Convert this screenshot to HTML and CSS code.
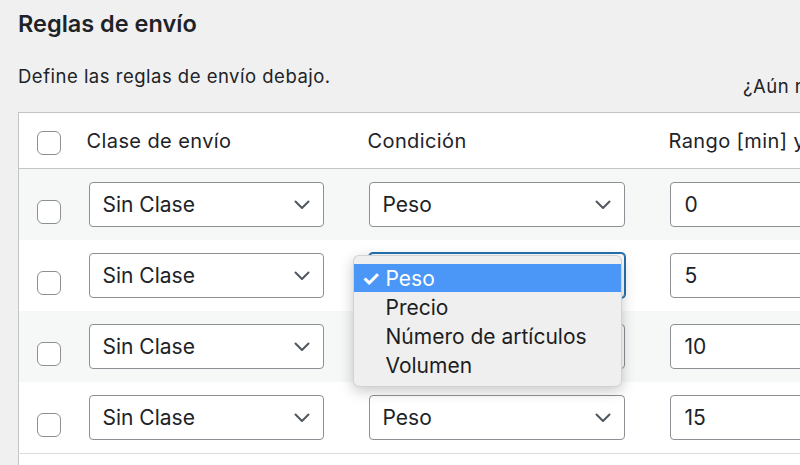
FILE: index.html
```html
<!DOCTYPE html>
<html lang="es">
<head>
<meta charset="utf-8">
<title>Reglas de envío</title>
<link rel="stylesheet" href="styles.css">
</head>
<body>
<div class="wrap">
  <h2 class="title">Reglas de envío</h2>
  <div class="intro">
    <p class="desc">Define las reglas de envío debajo.</p>
    <p class="note">¿Aún no tienes clases de envío? Créalas aquí.</p>
  </div>

  <table class="rules">
    <thead>
      <tr>
        <th class="col-check"><span class="checkbox head"></span></th>
        <th class="col-class">Clase de envío</th>
        <th class="col-cond">Condición</th>
        <th class="col-range">Rango [min] y [max]</th>
      </tr>
    </thead>
    <tbody>
      <tr class="alt">
        <td class="col-check"><span class="checkbox"></span></td>
        <td><div class="select sel-class"><span>Sin Clase</span><svg class="chev" viewBox="0 0 16 10"><path d="M1.5 1.5 L8 8 L14.5 1.5"/></svg></div></td>
        <td><div class="select sel-cond"><span>Peso</span><svg class="chev" viewBox="0 0 16 10"><path d="M1.5 1.5 L8 8 L14.5 1.5"/></svg></div></td>
        <td><div class="field">0</div></td>
      </tr>
      <tr>
        <td class="col-check"><span class="checkbox"></span></td>
        <td><div class="select sel-class"><span>Sin Clase</span><svg class="chev" viewBox="0 0 16 10"><path d="M1.5 1.5 L8 8 L14.5 1.5"/></svg></div></td>
        <td class="menu-host">
          <div class="select sel-cond focused"><span>Peso</span><svg class="chev" viewBox="0 0 16 10"><path d="M1.5 1.5 L8 8 L14.5 1.5"/></svg></div>
          <ul class="menu">
            <li class="active"><span class="tick">✓</span>Peso</li>
            <li>Precio</li>
            <li>Número de artículos</li>
            <li>Volumen</li>
          </ul>
        </td>
        <td><div class="field">5</div></td>
      </tr>
      <tr class="alt">
        <td class="col-check"><span class="checkbox"></span></td>
        <td><div class="select sel-class"><span>Sin Clase</span><svg class="chev" viewBox="0 0 16 10"><path d="M1.5 1.5 L8 8 L14.5 1.5"/></svg></div></td>
        <td><div class="select sel-cond"><span>Peso</span><svg class="chev" viewBox="0 0 16 10"><path d="M1.5 1.5 L8 8 L14.5 1.5"/></svg></div></td>
        <td><div class="field">10</div></td>
      </tr>
      <tr>
        <td class="col-check"><span class="checkbox"></span></td>
        <td><div class="select sel-class"><span>Sin Clase</span><svg class="chev" viewBox="0 0 16 10"><path d="M1.5 1.5 L8 8 L14.5 1.5"/></svg></div></td>
        <td><div class="select sel-cond"><span>Peso</span><svg class="chev" viewBox="0 0 16 10"><path d="M1.5 1.5 L8 8 L14.5 1.5"/></svg></div></td>
        <td><div class="field">15</div></td>
      </tr>
    </tbody>
    <tfoot>
      <tr><td colspan="4" class="foot"></td></tr>
    </tfoot>
  </table>
</div>
</body>
</html>
```

FILE: styles.css
```css
html, body {
  margin: 0;
  background: #f0f0f1;
  overflow: hidden;
}

body {
  font-family: Inter, "Noto Sans", "DejaVu Sans", sans-serif;
  color: #1d2327;
}

.wrap {
  width: 1100px;
  padding-left: 18px;
}

.title {
  margin: 0;
  padding-top: 10px;
  font-size: 23.5px;
  font-weight: 600;
  line-height: 28px;
}

.intro {
  display: grid;
  grid-template-columns: 725px auto;
  align-items: end;
  margin-top: 26px;
}

.desc,
.note {
  margin: 0;
  font-size: 18.5px;
  letter-spacing: 0.5px;
  line-height: 24px;
  white-space: nowrap;
}

.desc {
  margin-bottom: 10px;
}

/* rules table */
.rules {
  margin-top: 14px;
  width: 1000px;
  border-collapse: collapse;
  border: 1px solid #c3c4c7;
  background: #fff;
  table-layout: fixed;
}

.rules th {
  height: 55px;
  padding: 0 0 0 12px;
  text-align: left;
  font-weight: 400;
  font-size: 20px;
  letter-spacing: 0.4px;
  border-bottom: 1px solid #c3c4c7;
  vertical-align: middle;
  white-space: nowrap;
  overflow: hidden;
}

.rules td {
  height: 45px;
  padding: 13px 0 13px 13px;
  vertical-align: top;
}

.rules tr.alt td {
  background: #f6f7f7;
}

.rules .col-check {
  width: 56px;
  padding-left: 18px;
  padding-right: 0;
  box-sizing: border-box;
}

.rules th.col-class { width: 281px; box-sizing: border-box; }
.rules th.col-cond { width: 301px; box-sizing: border-box; }

.rules td.col-check {
  padding-top: 31px;
}

.rules td.foot {
  height: 12px;
  padding: 0;
  border-top: 1px solid #dcdcde;
}

.checkbox {
  display: block;
  width: 24px;
  height: 24px;
  box-sizing: border-box;
  border: 1px solid #8c8f94;
  border-radius: 6px;
  background: #fff;
}

.checkbox.head {
  margin-top: 4px;
}

/* select boxes */
.select {
  display: flex;
  align-items: center;
  justify-content: space-between;
  height: 45px;
  box-sizing: border-box;
  border: 1px solid #8c8f94;
  border-radius: 4px;
  background: #fff;
  padding: 0 13px 0 13px;
  font-size: 21px;
}

.sel-class {
  width: 235px;
  margin-left: 1px;
}

.sel-cond {
  width: 256px;
}

.select.focused {
  border-color: #2271b1;
  box-shadow: 0 0 0 1px #2271b1;
}

.chev {
  width: 16px;
  height: 10px;
  fill: none;
  stroke: #50575e;
  stroke-width: 2;
  stroke-linecap: round;
  stroke-linejoin: round;
}

.field {
  display: flex;
  align-items: center;
  height: 45px;
  box-sizing: border-box;
  border: 1px solid #8c8f94;
  border-radius: 4px;
  background: #fff;
  padding-left: 14px;
  font-size: 21px;
}

/* open option list */
.menu-host {
  position: relative;
}

.menu {
  position: absolute;
  left: -3px;
  top: 15px;
  width: 269px;
  margin: 0;
  padding: 8px 0 6px;
  list-style: none;
  background: #efefef;
  border: 1px solid rgba(0, 0, 0, 0.12);
  border-radius: 6px;
  box-shadow: 0 4px 14px rgba(0, 0, 0, 0.22);
  box-sizing: border-box;
  z-index: 2;
}

.menu li {
  display: flex;
  align-items: center;
  height: 29px;
  padding-left: 32px;
  font-size: 21px;
  color: #1d1d1d;
  position: relative;
}

.menu li.active {
  background: #4a97f7;
  color: #fff;
  height: 28px;
  margin-bottom: 1px;
}

.tick {
  position: absolute;
  left: 8px;
  font-size: 21px;
  font-weight: 700;
}
```
